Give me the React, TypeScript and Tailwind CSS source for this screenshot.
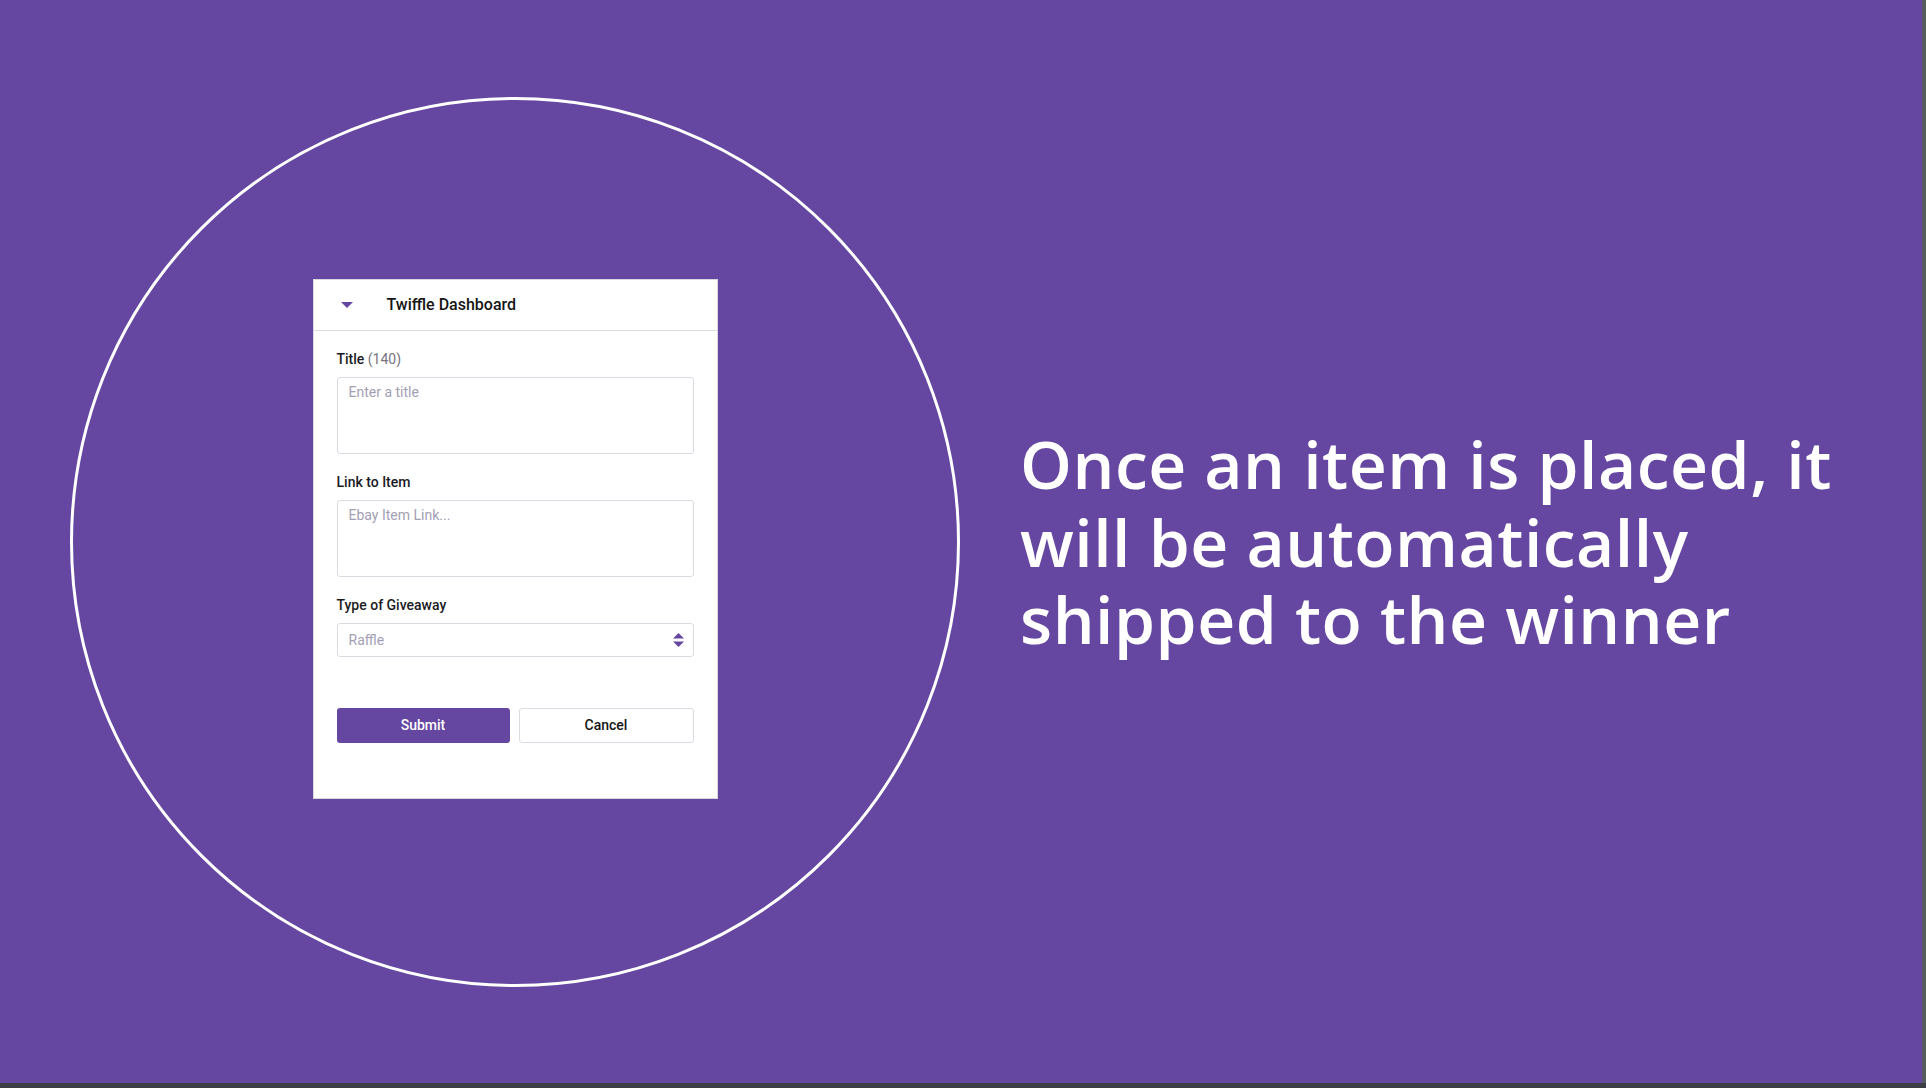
import React from "react";

function Field({ label, extra, placeholder }: { label: string; extra?: string; placeholder: string }) {
  return (
    <div className="flex flex-col">
      <div className="text-[14px] leading-[20px] font-medium text-[#1b1b1f]">
        {label}
        {extra ? <span className="font-normal text-[#77737f]"> {extra}</span> : null}
      </div>
      <textarea
        readOnly
        placeholder={placeholder}
        className="mt-[8px] h-[77px] w-full resize-none rounded-[3px] border border-[#dcdbe3] bg-white px-[11px] pt-[4px] text-[14px] leading-[20px] outline-none placeholder:text-[#a3a0b3]"
      />
    </div>
  );
}

export default function App() {
  return (
    <div className="flex h-[1088px] w-[1926px] flex-col bg-[#3b3e42]" style={{ fontFamily: "Roboto, 'Liberation Sans', sans-serif" }}>
      <div className="flex h-[1083px] w-[1926px]">
        <div className="flex h-[1083px] w-[1922px] items-center bg-[#6547a1] pl-[70px]">
          <div className="flex h-[890px] w-[890px] shrink-0 items-center justify-center rounded-full border-[3px] border-white">
            <div className="mb-[6px] flex h-[520px] w-[405px] flex-col border border-[#d9d8de] bg-white">
              <div className="flex h-[51px] items-center border-b border-[#dcdbe1]">
                <svg width="12" height="6" viewBox="0 0 12 6" className="ml-[27px]">
                  <path d="M0 0 H12 L6 6 Z" fill="#6547a1" />
                </svg>
                <span className="ml-[34px] text-[16px] leading-[24px] font-medium text-[#151515]">Twiffle Dashboard</span>
              </div>
              <div className="flex flex-col px-[23px] pt-[18px]">
                <Field label="Title" extra="(140)" placeholder="Enter a title" />
                <div className="mt-[18px]">
                  <Field label="Link to Item" placeholder="Ebay Item Link..." />
                </div>
                <div className="mt-[18px] flex flex-col">
                  <div className="text-[14px] leading-[20px] font-medium text-[#1b1b1f]">Type of Giveaway</div>
                  <div className="mt-[8px] flex h-[34px] items-center justify-between rounded-[3px] border border-[#dcdbe3] pl-[11px] pr-[9px]">
                    <span className="text-[14px] leading-[20px] text-[#a3a0b3]">Raffle</span>
                    <svg width="11" height="14" viewBox="0 0 11 14">
                      <path d="M5.5 0 L11 5.5 H0 Z" fill="#6547a1" />
                      <path d="M0 8.5 H11 L5.5 14 Z" fill="#6547a1" />
                    </svg>
                  </div>
                </div>
                <div className="mt-[51px] flex gap-[9px]">
                  <button className="h-[35px] flex-1 rounded-[3px] bg-[#6547a1] text-[14px] font-medium text-white">Submit</button>
                  <button className="h-[35px] flex-1 rounded-[3px] border border-[#dcdbe3] bg-white text-[14px] font-medium text-[#151515]">Cancel</button>
                </div>
              </div>
            </div>
          </div>
          <div
            className="ml-[60px] text-[66px] leading-[77.5px] font-semibold tracking-[0.5px] text-white"
            style={{ fontFamily: "'Open Sans', Lato, sans-serif" }}
          >
            <div>Once an item is placed, it</div>
            <div>will be automatically</div>
            <div>shipped to the winner</div>
          </div>
        </div>
        <div className="h-[1083px] w-[4px] bg-[#575c63]" />
      </div>
    </div>
  );
}
